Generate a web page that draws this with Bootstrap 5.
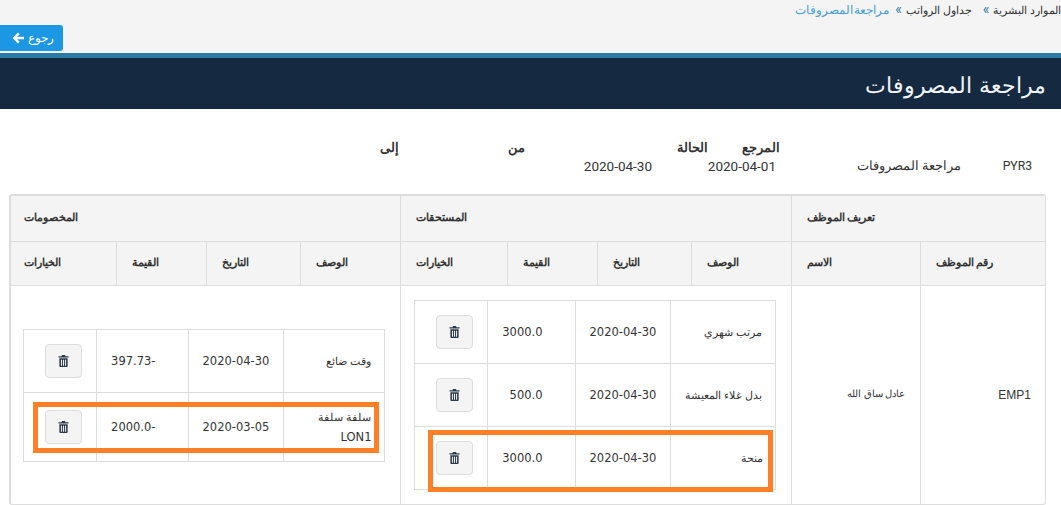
<!DOCTYPE html>
<html lang="ar" dir="rtl">
<head>
<meta charset="utf-8">
<title>مراجعة المصروفات</title>
<link rel="stylesheet" href="https://cdn.jsdelivr.net/npm/bootstrap@5.3.0/dist/css/bootstrap.min.css">
<style>
html,body{height:505px;overflow:hidden}
body{background:#fff;color:#333;font-family:"Roboto",sans-serif;font-size:13px}
.top-zone{background:#f4f4f4;height:53px;overflow:hidden}
.crumbs{height:25px;line-height:21px;color:#333;font-size:11.2px}
.crumbs .now{color:#4a9fd8;font-size:12px;word-spacing:-2px}
.crumbs .sep{color:#2a7ba6;font-size:14px;line-height:18px;margin:0 4px 0 11px}
.crumbs .sep-b{margin-left:6px}
.back-btn{width:63px;height:26px;padding:0 0 0 3px;border:0;border-radius:0 3px 3px 0;background:#1c97e3;color:#fff;font-size:11.5px;line-height:26px;gap:4px}
.back-btn:hover{background:#1c97e3;color:#fff}
.title-band{background:#152a40;border-top:5px solid #2a7ba6;height:56px;padding:0 15px;color:#f2f5f8}
.title-band h1{font-family:"DejaVu Sans ExtraLight","DejaVu Sans Light","Roboto",sans-serif;font-size:22.3px;font-weight:300;line-height:54px;margin:0}
.info-block{height:85px;padding-top:31px}
.info-labels{font-weight:700;font-size:13px;line-height:16px}
.info-values{font-size:13.5px;line-height:20px;margin-top:0}
.lb1{margin-right:281px;width:40px}.lb2{margin-right:32px;width:33px}.lb3{margin-right:150px;width:20px}.lb4{margin-right:106px}
.vl1{margin-right:29px;width:71px;font-size:12.2px}.vl2{width:185px;font-size:12.9px}.vl3{width:124px;text-align:right}
.frame{width:1037px;margin-right:15px;border:1px solid #ddd;border-width:2px 1px 1px 2px;border-radius:3px;overflow:hidden}
.pay-table{--bs-table-border-color:#ddd;--bs-table-color:#333;table-layout:fixed;margin:0;width:1034px;border-style:hidden}
.pay-table>thead>tr>th{--bs-table-bg:#f4f4f4;text-align:left;font-size:11.3px;font-weight:700;height:44px;padding:0 15px;vertical-align:middle}
.pay-table>thead>tr:first-child>th{height:45px}
.pay-table>thead>tr>th:last-child{padding-left:13px}
.pay-table>tbody>tr>td{vertical-align:middle;padding:14px;font-family:"Liberation Sans",sans-serif;font-size:9.8px}
.pay-table>tbody>tr>td.emp-id{font-size:12px}
.pay-table>tbody>tr>td.nest-cell{padding:14px 15px 14px 15px}
.pay-table>tbody>tr>td.nest-cell:last-child{padding-left:13px;padding-top:16px}
.nest-wrap{position:relative;width:361px}
.inner-table{--bs-table-border-color:#ddd;--bs-table-color:#333;table-layout:fixed;margin:0;width:361px;border:1px solid #ddd}
.inner-table>tbody>tr>td{padding:14px 8px 14px 8px;padding-right:12px;vertical-align:middle;font-family:"Liberation Sans",sans-serif;font-size:11.4px;line-height:20px}
.inner-table>tbody>tr>td.num{font-family:"DejaVu Sans",sans-serif;font-size:11.5px;padding-right:8px;padding-left:14px}
.inner-table>tbody>tr>td.amount{font-family:"DejaVu Sans",sans-serif;padding-right:32px;padding-left:8px;font-size:11.5px}
.inner-table>tbody>tr>td.act{padding:14px}
.latin{display:block;font-family:"DejaVu Sans",sans-serif;font-size:11.5px}
.trash-btn{display:flex;align-items:center;justify-content:center;width:37px;height:34px;padding:0;background:#f4f4f4;border:1px solid #ddd;border-radius:4px}
.trash-btn svg{width:11px;height:12px;fill:#2e3a48}
.mark-box{position:absolute;border:5px solid #ff7f27;pointer-events:none}
.mark-a{left:13px;right:3px;top:130px;height:62px}
.mark-b{left:9px;right:6px;top:73px;height:51px}
</style>
</head>
<body>
<svg width="0" height="0" class="position-absolute">
<symbol id="trash" viewBox="0 0 12 13"><path d="M4.4 0h3.2l.6 1.2H11.5v1.6H.5V1.2h3.3zM1.5 3.6h9V12a1 1 0 0 1-1 1h-7a1 1 0 0 1-1-1zM3.2 5v6.6h1.1V5zm2.2 0v6.6h1.2V5zm2.3 0v6.6h1.1V5z"/></symbol>
</svg>

<div class="top-zone">
  <div class="crumbs d-flex"><span>الموارد البشرية</span><span class="sep">»</span><span>جداول الرواتب</span><span class="sep sep-b">»</span><span class="now">مراجعة المصروفات</span></div>
  <div class="d-flex justify-content-end">
    <button type="button" class="back-btn btn d-flex align-items-center justify-content-center">رجوع
      <svg width="12" height="12" viewBox="0 0 12 12" fill="#fff"><path d="M6 .6l1.6 1.6L5 4.8h7v2.4H5l2.6 2.6L6 11.4.6 6z"/></svg>
    </button>
  </div>
</div>

<div class="title-band"><h1>مراجعة المصروفات</h1></div>

<div class="info-block">
  <div class="info-labels d-flex"><span class="lb1">المرجع</span><span class="lb2">الحالة</span><span class="lb3">من</span><span class="lb4">إلى</span></div>
  <div class="info-values d-flex">
    <span class="vl1">PYR3</span><span class="vl2">مراجعة المصروفات</span><span class="vl3" dir="ltr">2020-04-01</span><span class="vl3" dir="ltr">2020-04-30</span>
  </div>
</div>

<div class="frame">
<table class="table table-bordered pay-table">
  <colgroup><col style="width:125px"><col style="width:129px"><col style="width:100px"><col style="width:94px"><col style="width:90px"><col style="width:107px"><col style="width:100px"><col style="width:94px"><col style="width:90px"><col style="width:105px"></colgroup>
  <thead>
    <tr><th colspan="2">تعريف الموظف</th><th colspan="4">المستحقات</th><th colspan="4">المخصومات</th></tr>
    <tr><th>رقم الموظف</th><th>الاسم</th><th>الوصف</th><th>التاريخ</th><th>القيمة</th><th>الخيارات</th><th>الوصف</th><th>التاريخ</th><th>القيمة</th><th>الخيارات</th></tr>
  </thead>
  <tbody>
    <tr>
      <td class="emp-id">EMP1</td>
      <td>عادل ساق الله</td>
      <td colspan="4" class="nest-cell">
        <div class="nest-wrap">
          <table class="table table-bordered inner-table">
            <colgroup><col style="width:105px"><col style="width:95px"><col style="width:88px"><col style="width:73px"></colgroup>
            <tbody>
              <tr><td>مرتب شهري</td><td class="num" dir="ltr">2020-04-30</td><td class="amount">3000.0</td><td class="act"><button type="button" class="trash-btn"><svg><use href="#trash"/></svg></button></td></tr>
              <tr><td>بدل غلاء المعيشة</td><td class="num" dir="ltr">2020-04-30</td><td class="amount">500.0</td><td class="act"><button type="button" class="trash-btn"><svg><use href="#trash"/></svg></button></td></tr>
              <tr><td>منحة</td><td class="num" dir="ltr">2020-04-30</td><td class="amount">3000.0</td><td class="act"><button type="button" class="trash-btn"><svg><use href="#trash"/></svg></button></td></tr>
            </tbody>
          </table>
          <div class="mark-box mark-a"></div>
        </div>
      </td>
      <td colspan="4" class="nest-cell">
        <div class="nest-wrap">
          <table class="table table-bordered inner-table">
            <colgroup><col style="width:101px"><col style="width:95px"><col style="width:92px"><col style="width:73px"></colgroup>
            <tbody>
              <tr><td>وقت ضائع</td><td class="num" dir="ltr">2020-04-30</td><td class="amount">-397.73</td><td class="act"><button type="button" class="trash-btn"><svg><use href="#trash"/></svg></button></td></tr>
              <tr><td>سلفة سلفة <span class="latin">LON1</span></td><td class="num" dir="ltr">2020-03-05</td><td class="amount">-2000.0</td><td class="act"><button type="button" class="trash-btn"><svg><use href="#trash"/></svg></button></td></tr>
            </tbody>
          </table>
          <div class="mark-box mark-b"></div>
        </div>
      </td>
    </tr>
  </tbody>
</table>
</div>
<script src="https://cdn.jsdelivr.net/npm/bootstrap@5.3.0/dist/js/bootstrap.bundle.min.js"></script>
</body>
</html>
